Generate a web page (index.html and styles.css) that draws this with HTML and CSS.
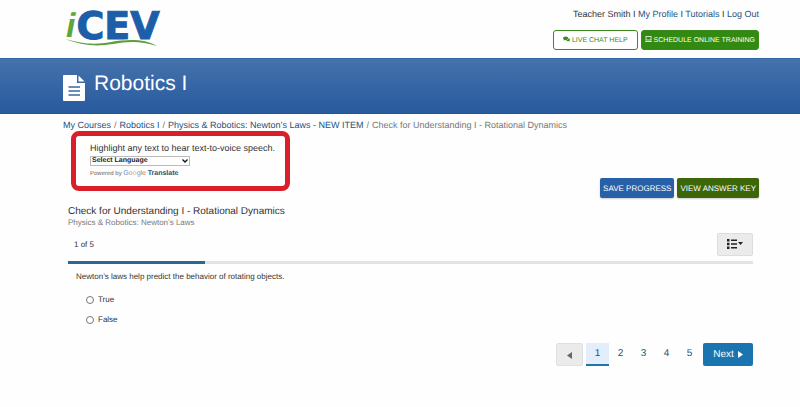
FILE: index.html
```html
<!DOCTYPE html>
<html lang="en">
<head>
  <meta charset="UTF-8">
  <meta name="viewport" content="width=device-width, initial-scale=1.0">
  <title>Robotics I - iCEV</title>
  <link rel="stylesheet" href="styles.css">
</head>
<body>
  <header class="header">
    <a class="logo" href="#" aria-label="iCEV home">
      <svg width="110" height="42" viewBox="0 0 110 42">
        <text x="1" y="31"><tspan class="logo-i" y="29">i</tspan><tspan class="logo-cev" dx="1" y="31">CEV</tspan></text>
        <path d="M0 31 C18 36 30 37 46 34 C64 31 80 31 92 38 C76 33 64 33 48 36 C30 39 16 37 0 31Z" fill="#5f9e3c" stroke="#fefefe" stroke-width="1" paint-order="stroke"/>
      </svg>
    </a>
    <div class="account">
      <nav class="account-links">
        Teacher Smith I <a href="#">My Profile</a> I <a href="#">Tutorials</a> I <a href="#">Log Out</a>
      </nav>
      <div class="account-buttons">
        <button class="help-btn chat">
          <svg width="7" height="6" viewBox="0 0 16 14" fill="currentColor">
            <path d="M6 1C2.700 1 0 2.900 0 5.200c0 1.300.8 2.400 2 3.200L1 10.500l3.500-1.300c.5.100 1 .2 1.500.2 3.300 0 6-1.900 6-4.200S9.300 1 6 1z"/>
            <path d="M13 4.500c0 3.200-2.900 5.600-6.500 5.900 1 1 2.500 1.600 4 1.600.5 0 .9 0 1.300-.1L15.500 13.500l-1-2.200c1-.7 1.500-1.700 1.500-2.800 0-1.700-1.200-3.300-3-4z"/>
          </svg>
          LIVE CHAT HELP
        </button>
        <button class="help-btn training">
          <svg width="7" height="6" viewBox="0 0 14 12" fill="none" stroke="currentColor" stroke-width="1.5">
            <rect x="2" y="1" width="10" height="7"/>
            <path d="M0 11h14"/>
          </svg>
          SCHEDULE ONLINE TRAINING
        </button>
      </div>
    </div>
  </header>

  <div class="banner">
    <svg width="22" height="26" viewBox="0 0 22 26">
      <path d="M1 0H14V8H22V25Q22 26 21 26H1Q0 26 0 25V1Q0 0 1 0Z" fill="#fff"/>
      <path d="M15.500 0.500L21.500 6.500H15.500Z" fill="#fff"/>
      <path d="M5.500 12H17M5.500 16H17M5.500 20H17" stroke="#3a68a6" stroke-width="1.500"/>
    </svg>
    <h1>Robotics I</h1>
  </div>

  <main class="content">
    <nav class="breadcrumb">
      <a href="#">My Courses</a><span>/</span><a href="#">Robotics I</a><span>/</span><a href="#">Physics &amp; Robotics: Newton’s Laws - NEW ITEM</a><span>/</span>Check for Understanding I - Rotational Dynamics
    </nav>

    <div class="tools">
      <div class="translate">
        <label for="language">Highlight any text to hear text-to-voice speech.</label>
        <div class="select-wrap">
          <select id="language">
            <option>Select Language</option>
          </select>
          <svg width="6" height="4" viewBox="0 0 6 4"><path d="M.5 .5L3 3L5.500 .5" fill="none" stroke="#111" stroke-width="1.300"/></svg>
        </div>
        <p class="powered">Powered by
          <span class="google"><span class="g-blue">G</span><span class="g-red">o</span><span class="g-yellow">o</span><span class="g-blue">g</span><span class="g-green">l</span><span class="g-red">e</span></span>
          <a href="#">Translate</a>
        </p>
      </div>
      <div class="actions">
        <button class="action save">SAVE PROGRESS</button>
        <button class="action key">VIEW ANSWER KEY</button>
      </div>
    </div>

    <section class="assessment">
      <h2>Check for Understanding I - Rotational Dynamics</h2>
      <p class="subtitle">Physics &amp; Robotics: Newton’s Laws</p>

      <div class="status">
        <span>1 of 5</span>
        <button class="list-btn" aria-label="Question list">
          <svg width="16" height="10" viewBox="0 0 16 10" fill="#222">
            <path d="M0 0h2.500v2.500H0zM0 3.750h2.500v2.500H0zM0 7.500h2.500v2.500H0zM4 .5h6v1.500H4zM4 4.250h6v1.500H4zM4 8h6v1.500H4zM11 3h5L13.500 6z"/>
          </svg>
        </button>
      </div>
      <div class="progress"><div class="progress-fill" style="width: 20%"></div></div>

      <fieldset class="question">
        <legend>Newton’s laws help predict the behavior of rotating objects.</legend>
        <label><input type="radio" name="answer" value="true">True</label>
        <label><input type="radio" name="answer" value="false">False</label>
      </fieldset>

      <nav class="pagination">
        <button class="prev" aria-label="Previous">
          <svg width="5" height="7" viewBox="0 0 5 7"><path d="M5 0v7L0 3.500z" fill="#666"/></svg>
        </button>
        <a class="page current" href="#">1</a>
        <a class="page" href="#">2</a>
        <a class="page" href="#">3</a>
        <a class="page" href="#">4</a>
        <a class="page" href="#">5</a>
        <button class="next">Next
          <svg width="5" height="7" viewBox="0 0 5 7"><path d="M0 0v7l5-3.500z" fill="#fff"/></svg>
        </button>
      </nav>
    </section>
  </main>
</body>
</html>
```

FILE: styles.css
```css
* {
  box-sizing: border-box;
}
body {
  margin: 0;
  font-family: "Liberation Sans", Arial, sans-serif;
  font-size: 9px;
  line-height: 12px;
  text-rendering: geometricPrecision;
  color: #333;
  background-color: #fefefe;
}
h1, h2, p {
  margin: 0;
  font-weight: normal;
}
a {
  color: #24527a;
  text-decoration: none;
}
button {
  font-family: inherit;
  text-rendering: inherit;
  border: none;
  border-radius: 2px;
  padding: 0;
  cursor: pointer;
}

/* Header */
.header {
  display: flex;
  justify-content: space-between;
  padding: 8px 41px 8px 65px;
}
.logo svg {
  display: block;
  overflow: visible;
}
.logo-i {
  font-size: 34px;
  font-weight: bold;
  font-style: italic;
  fill: #5fa53a;
}
.logo-cev {
  font-family: "DejaVu Sans", sans-serif;
  font-size: 38px;
  font-weight: bold;
  fill: #1c5fa8;
  stroke: #1c5fa8;
}
.account {
  text-align: right;
}
.account-buttons {
  display: flex;
  justify-content: flex-end;
  gap: 3px;
  margin-top: 10px;
}
.help-btn {
  height: 20px;
  padding: 0 3px;
  font-size: 7px;
  border: 1px solid #3b8a1e;
  border-radius: 3px;
}
.chat {
  padding: 0 9px;
  color: #3b8a1e;
  background-color: #fff;
}
.training {
  color: #fff;
  background-color: #338a12;
}

/* Banner */
.banner {
  display: flex;
  align-items: center;
  gap: 9px;
  height: 56px;
  padding: 0 63px;
  color: #fff;
  background: linear-gradient(#4472ab, #285a9e);
  border-top: 1px solid #3568a8;
  border-bottom: 1px solid #24549a;
}
.banner svg {
  margin-top: 4px;
}
.banner h1 {
  font-size: 21px;
  line-height: 28px;
  margin-bottom: 4px;
}

/* Content */
.content {
  padding: 5px 41px 20px 63px;
}
.breadcrumb {
  color: #777;
}
.breadcrumb span {
  padding: 0 3px;
}
.tools {
  display: flex;
  justify-content: space-between;
  align-items: flex-start;
}
.translate {
  width: 219px;
  margin-left: 8px;
  padding: 6px 14px;
  border: 5px solid #d9202a;
  border-radius: 8px;
}
.translate label {
  display: block;
  white-space: nowrap;
}
.select-wrap {
  position: relative;
  width: 100px;
  margin-top: 2px;
}
.select-wrap svg {
  position: absolute;
  top: 3px;
  right: 2px;
  pointer-events: none;
}
.translate select {
  display: block;
  width: 100%;
  height: 10px;
  padding: 0 1px;
  appearance: none;
  font-family: inherit;
  font-size: 7px;
  line-height: 8px;
  font-weight: bold;
  text-rendering: inherit;
  color: #222;
  background-color: #fff;
  border: 1px solid #bbb;
  border-radius: 0;
}
.powered {
  margin-top: 2px;
  font-size: 6px;
  color: #666;
}
.powered a {
  font-size: 7px;
  font-weight: bold;
}
.google {
  font-size: 7px;
}
.g-blue {
  color: #6a94d8;
}
.g-red {
  color: #dd7a70;
}
.g-yellow {
  color: #e0b850;
}
.g-green {
  color: #6cb07c;
}
.actions {
  display: flex;
  gap: 3px;
  margin-top: 47px;
}
.action {
  height: 20px;
  padding: 0 3px;
  font-size: 8px;
  color: #fff;
  box-shadow: 0 1px 2px rgba(0, 0, 0, 0.2);
}
.save {
  background-color: #2860a8;
}
.key {
  background-color: #3c6608;
}

/* Assessment */
.assessment {
  padding: 8px 6px 0 5px;
}
.assessment h2 {
  font-size: 10px;
}
.subtitle {
  font-size: 8px;
  line-height: 10px;
  color: #777;
}
.status {
  display: flex;
  justify-content: space-between;
  align-items: center;
  margin: 5px 0;
  padding-left: 6px;
  font-size: 8px;
}
.list-btn {
  width: 36px;
  height: 23px;
  background-color: #ebebeb;
  border: 1px solid #ddd;
}
.progress {
  height: 3px;
  background-color: #e3e3e3;
}
.progress-fill {
  height: 3px;
  background-color: #2a6a92;
}
.question {
  margin: 7px 0 0;
  padding: 0 8px;
  font-size: 8px;
  border: none;
}
.question legend {
  padding: 0;
  margin-bottom: 11px;
}
.question label {
  display: flex;
  align-items: center;
  gap: 4px;
  margin: 0 0 8px 10px;
}
.question input {
  width: 8px;
  height: 8px;
  margin: 0;
}

/* Pagination */
.pagination {
  display: flex;
  justify-content: flex-end;
  margin-top: 9px;
}
.prev {
  width: 27px;
  height: 23px;
  margin-right: 3px;
  background-color: #ebebeb;
  border: 1px solid #e0e0e0;
}
.page {
  width: 23px;
  font-size: 10px;
  line-height: 21px;
  text-align: center;
}
.current {
  background-color: #e3eefa;
  border-bottom: 2px solid #1c75ad;
}
.next {
  display: flex;
  align-items: center;
  justify-content: center;
  gap: 4px;
  height: 23px;
  width: 50px;
  margin-left: 2px;
  font-size: 10px;
  color: #fff;
  background-color: #1a74b0;
}
```
